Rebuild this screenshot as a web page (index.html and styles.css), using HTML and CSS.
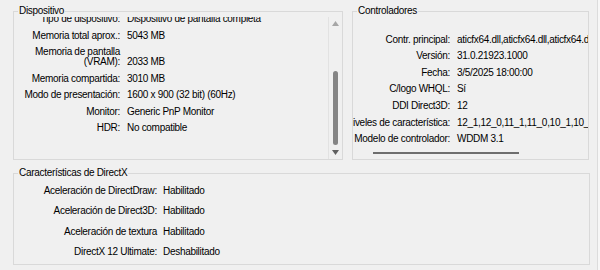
FILE: index.html
```html
<!DOCTYPE html>
<html lang="es">
<head>
    <meta charset="UTF-8">
    <meta name="viewport" content="width=device-width, initial-scale=1.0">
    <title>Pantalla</title>
    <link rel="stylesheet" href="styles.css">
</head>
<body>
    <div class="window">
        <div class="top">
            <fieldset class="group group-device">
                <legend>Dispositivo</legend>
                <div class="list-wrap">
                    <div class="list">
                        <div class="rows rows-device">
                            <div class="row"><span class="label">Tipo de dispositivo:</span><span class="value">Dispositivo de pantalla completa</span></div>
                            <div class="row"><span class="label">Memoria total aprox.:</span><span class="value">5043 MB</span></div>
                            <div class="row"><span class="label">Memoria de pantalla (VRAM):</span><span class="value">2033 MB</span></div>
                            <div class="row"><span class="label">Memoria compartida:</span><span class="value">3010 MB</span></div>
                            <div class="row"><span class="label">Modo de presentación:</span><span class="value">1600 x 900 (32 bit) (60Hz)</span></div>
                            <div class="row"><span class="label">Monitor:</span><span class="value">Generic PnP Monitor</span></div>
                            <div class="row"><span class="label">HDR:</span><span class="value">No compatible</span></div>
                        </div>
                    </div>
                    <div class="vscroll">
                        <svg class="arrow arrow-up" width="7" height="5" viewBox="0 0 7 5"><path d="M3.5 0 L7 5 L0 5 Z"/></svg>
                        <div class="vthumb"></div>
                        <svg class="arrow arrow-down" width="7" height="5" viewBox="0 0 7 5"><path d="M0 0 L7 0 L3.5 5 Z"/></svg>
                    </div>
                </div>
            </fieldset>

            <fieldset class="group group-drivers">
                <legend>Controladores</legend>
                <div class="list list-drivers">
                    <div class="rows rows-drivers">
                        <div class="row"><span class="label">Contr. principal:</span><span class="value">aticfx64.dll,aticfx64.dll,aticfx64.dll,amdxc64.dll</span></div>
                        <div class="row"><span class="label">Versión:</span><span class="value">31.0.21923.1000</span></div>
                        <div class="row"><span class="label">Fecha:</span><span class="value">3/5/2025 18:00:00</span></div>
                        <div class="row"><span class="label">C/logo WHQL:</span><span class="value">Sí</span></div>
                        <div class="row"><span class="label">DDI Direct3D:</span><span class="value">12</span></div>
                        <div class="row"><span class="label">Niveles de característica:</span><span class="value">12_1,12_0,11_1,11_0,10_1,10_0,9_3,9_2,9_1</span></div>
                        <div class="row"><span class="label">Modelo de controlador:</span><span class="value">WDDM 3.1</span></div>
                    </div>
                    <div class="hthumb"></div>
                </div>
            </fieldset>
        </div>

        <fieldset class="group group-dx">
            <legend>Características de DirectX</legend>
            <div class="rows rows-dx">
                <div class="row"><span class="label">Aceleración de DirectDraw:</span><span class="value">Habilitado</span></div>
                <div class="row"><span class="label">Aceleración de Direct3D:</span><span class="value">Habilitado</span></div>
                <div class="row"><span class="label">Aceleración de textura</span><span class="value">Habilitado</span></div>
                <div class="row"><span class="label">DirectX 12 Ultimate:</span><span class="value">Deshabilitado</span></div>
            </div>
        </fieldset>
    </div>
</body>
</html>
```

FILE: styles.css
```css
body {
    margin: 0;
    background-color: #f7f7f7;
    font-family: "Liberation Sans", Arial, sans-serif;
    font-size: 10px;
    letter-spacing: -0.3px;
    color: #000;
}

.window {
    width: 598px;
    height: 270px;
    padding: 5px 0 0 13px;
    box-sizing: border-box;
    background-color: #f0f0f0;
    border-right: 1px solid #dcdcdc;
}

.top {
    display: flex;
    gap: 9px;
}

.group {
    margin: 0;
    padding: 0;
    min-width: 0;
    border: 1px solid #d9d9d9;
    box-sizing: border-box;
}

.group legend {
    margin-left: 4px;
    padding: 0 1px;
    line-height: 12px;
}

.group-device {
    width: 330px;
}

.group-drivers {
    width: 237px;
}

.group-dx {
    width: 577px;
    margin-top: 7px;
}

/* lists */

.list-wrap {
    display: flex;
    height: 142px;
}

.list {
    flex: 1;
    overflow: hidden;
}

.rows-device {
    margin-top: -6px;
}

.row {
    display: flex;
    align-items: flex-end;
    padding: 3px 0 3.5px;
    line-height: 10px;
}

.label {
    flex: none;
    display: flex;
    justify-content: flex-end;
    text-align: right;
}

.value {
    margin-left: 7px;
    white-space: nowrap;
}

.rows-device .label {
    width: 104px;
    padding-left: 2px;
}

/* scrollbar */

.vscroll {
    width: 13px;
    border-left: 1px solid #e2e2e2;
    display: flex;
    flex-direction: column;
    align-items: center;
}

.arrow-up {
    margin-top: 4px;
    fill: #a6a6a6;
}

.vthumb {
    width: 5px;
    height: 74px;
    margin-top: 45px;
    border-radius: 3px;
    background-color: #858585;
}

.arrow-down {
    margin-top: 5px;
    fill: #606060;
}

/* drivers */

.list-drivers {
    height: 142px;
    display: flex;
    flex-direction: column;
}

.rows-drivers {
    padding-top: 14.5px;
}

.rows-drivers .row {
    padding: 3px 0 3.67px;
}

.rows-drivers .label {
    width: 97px;
    white-space: nowrap;
}

.hthumb {
    width: 146px;
    height: 2px;
    margin: auto 0 5px 20px;
    background-color: #6e6e6e;
}

/* directx */

.rows-dx {
    padding: 1.5px 0 1.5px;
}

.rows-dx .row {
    padding: 5px 0 5.5px;
}

.rows-dx .label {
    width: 143px;
}

.rows-dx .value {
    margin-left: 6px;
}
```
